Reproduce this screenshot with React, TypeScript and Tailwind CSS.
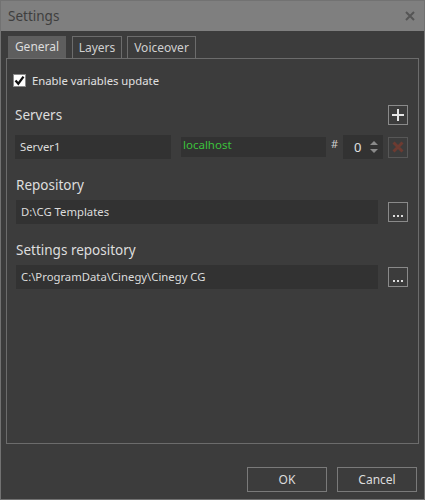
import React from "react";

const font = { fontFamily: '"Noto Sans", "Open Sans", sans-serif' };

function DotsButton() {
  return (
    <button className="w-[20px] h-[20px] border border-[#8a8a8a] flex items-end justify-center pb-[4px] shrink-0">
      <span className="flex gap-[2px]">
        <span className="w-[2px] h-[2px] bg-[#dcdcdc]" />
        <span className="w-[2px] h-[2px] bg-[#dcdcdc]" />
        <span className="w-[2px] h-[2px] bg-[#dcdcdc]" />
      </span>
    </button>
  );
}

export default function App() {
  return (
    <div
      className="w-[425px] h-[500px] bg-[#3c3c3c] border border-[#727272] flex flex-col overflow-hidden"
      style={font}
    >
      {/* Title bar */}
      <div className="h-[30px] bg-[#7f7f7f] flex items-center justify-between pl-[7px] pr-[9px] shrink-0">
        <span className="text-[13.5px] text-[#3e3e3e] leading-none pt-[1px]">Settings</span>
        <svg width="10" height="10" viewBox="0 0 10 10">
          <path d="M1 1 L9 9 M9 1 L1 9" stroke="#555" strokeWidth="2" />
        </svg>
      </div>

      <div className="flex-1 flex flex-col px-[5px] pt-[5px]">
        {/* Tabs */}
        <div className="flex pl-[2px] h-[22px] items-stretch text-[12px]">
          <div className="w-[58px] bg-[#5e5e5e] text-[#dcdcdc] flex items-center justify-center">General</div>
          <div className="w-[50px] ml-[6px] border border-b-0 border-[#6c6c6c] text-[#d0d0d0] flex items-center justify-center">Layers</div>
          <div className="w-[69px] ml-[5px] border border-b-0 border-[#6c6c6c] text-[#d0d0d0] flex items-center justify-center">Voiceover</div>
        </div>

        {/* Panel */}
        <div className="flex-1 border border-[#6c6c6c] flex flex-col">
          <div className="flex items-center mt-[15px] ml-[6px] h-[13px]">
            <div className="w-[13px] h-[13px] bg-white border border-[#8a8a8a] flex items-center justify-center">
              <svg width="11" height="11" viewBox="0 0 11 11">
                <path d="M1.5 5.5 L4.3 8.7 L9.5 1.6" stroke="#111" strokeWidth="2.3" fill="none" />
              </svg>
            </div>
            <span className="ml-[6px] text-[11.3px] text-[#e0e0e0] leading-none">Enable variables update</span>
          </div>

          {/* Servers */}
          <div className="flex items-center justify-between mt-[18px] pl-[8px] pr-[10px] h-[20px]">
            <span className="text-[13.5px] text-[#dedede] leading-none pt-[2px]">Servers</span>
            <button className="w-[20px] h-[20px] border border-[#8a8a8a] flex items-center justify-center">
              <svg width="12" height="12" viewBox="0 0 12 12">
                <path d="M6 0 V12 M0 6 H12" stroke="#e6e6e6" strokeWidth="2" />
              </svg>
            </button>
          </div>

          <div className="flex items-center mt-[10px] pl-[8px] h-[24px]">
            <div className="w-[156px] h-[24px] bg-[#323232] flex items-center pl-[5px] text-[11.3px] text-[#dcdcdc]">Server1</div>
            <div className="w-[145px] h-[20px] ml-[10px] bg-[#323232] flex items-start pl-[2px] text-[11.5px] text-[#3cc23c] leading-none pt-[2px]">localhost</div>
            <span className="ml-[5px] w-[12px] text-[11px] text-[#d0d0d0] self-start leading-none mt-[3px]">#</span>
            <div className="w-[40px] h-[24px] bg-[#323232] flex items-center">
              <span className="ml-[11px] text-[13px] text-[#e0e0e0] leading-none">0</span>
              <div className="ml-[9px] flex flex-col gap-[4px]">
                <svg width="8" height="4" viewBox="0 0 8 4"><path d="M0 4 L4 0 L8 4 Z" fill="#8a8a8a" /></svg>
                <svg width="8" height="4" viewBox="0 0 8 4"><path d="M0 0 L4 4 L8 0 Z" fill="#8a8a8a" /></svg>
              </div>
            </div>
            <button className="ml-[5px] w-[20px] h-[21px] border border-[#575757] flex items-center justify-center">
              <svg width="12" height="12" viewBox="0 0 12 12">
                <path d="M1.5 1.5 L10.5 10.5 M10.5 1.5 L1.5 10.5" stroke="#6d3b31" strokeWidth="3" />
              </svg>
            </button>
          </div>

          {/* Repository */}
          <div className="mt-[16px] pl-[9px] h-[20px] flex items-center">
            <span className="text-[13.5px] text-[#dedede] leading-none pt-[2px]">Repository</span>
          </div>
          <div className="flex items-center mt-[5px] pl-[9px] pr-[10px] h-[24px]">
            <div className="flex-1 h-[24px] bg-[#323232] flex items-center pl-[5px] text-[11.3px] text-[#dcdcdc]">D:\CG Templates</div>
            <div className="ml-[10px]"><DotsButton /></div>
          </div>

          {/* Settings repository */}
          <div className="mt-[16px] pl-[9px] h-[20px] flex items-center">
            <span className="text-[13.5px] text-[#dedede] leading-none pt-[2px]">Settings repository</span>
          </div>
          <div className="flex items-center mt-[5px] pl-[9px] pr-[10px] h-[24px]">
            <div className="flex-1 h-[24px] bg-[#323232] flex items-center pl-[5px] text-[11.3px] text-[#dcdcdc]">C:\ProgramData\Cinegy\Cinegy CG</div>
            <div className="ml-[10px]"><DotsButton /></div>
          </div>
        </div>

        {/* Buttons */}
        <div className="flex justify-end gap-[10px] mt-[23px] mb-[7px] pr-[2px]">
          <button className="w-[80px] h-[25px] border border-[#7a7a7a] text-[12px] text-[#dcdcdc]">OK</button>
          <button className="w-[80px] h-[25px] border border-[#7a7a7a] text-[12px] text-[#dcdcdc]">Cancel</button>
        </div>
      </div>
    </div>
  );
}
